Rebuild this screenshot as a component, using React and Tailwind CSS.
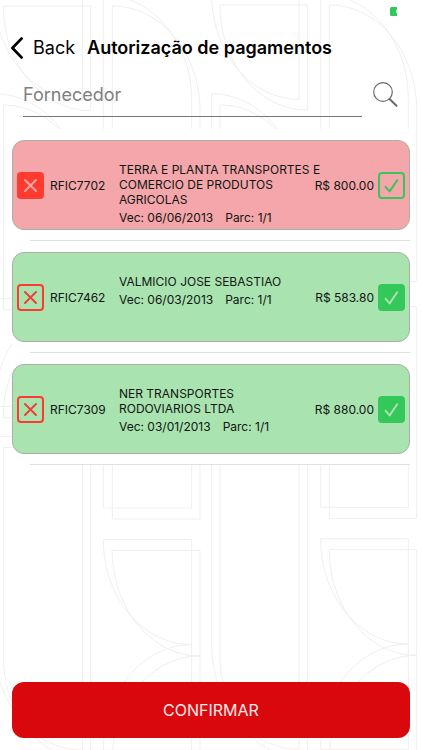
import React, { useState } from "react";

const initialPayments = [
  {
    code: "RFIC7702",
    lines: ["TERRA E PLANTA TRANSPORTES E", "COMERCIO DE PRODUTOS", "AGRICOLAS"],
    due: "06/06/2013",
    part: "1/1",
    amount: "800.00",
    approved: false,
  },
  {
    code: "RFIC7462",
    lines: ["VALMICIO JOSE SEBASTIAO"],
    due: "06/03/2013",
    part: "1/1",
    amount: "583.80",
    approved: true,
  },
  {
    code: "RFIC7309",
    lines: ["NER TRANSPORTES", "RODOVIARIOS LTDA"],
    due: "03/01/2013",
    part: "1/1",
    amount: "880.00",
    approved: true,
  },
];

// Thin-line tile pattern drawn behind the whole screen.
function Backdrop() {
  return (
    <svg
      className="pointer-events-none absolute inset-0 -z-10 h-full w-full"
      viewBox="0 0 1266 2250"
      preserveAspectRatio="xMidYMin slice"
      fill="none"
      stroke="#efefef"
      strokeWidth="3"
      aria-hidden="true"
    >
      <path d="M-16 -15H247V300C100 300 -16 160 -16 -15Z" />
      <path d="M10 18H272V332C127 332 10 192 10 18Z" />
      <path d="M635 -18H897V298C752 298 635 157 635 -18Z" />
      <path d="M660 15H922V330C777 330 660 190 660 15Z" />
      <path d="M310 -15C456 -15 575 126 575 300V845H310Z" />
      <path d="M337 18C482 18 600 158 600 332V845H337Z" />
      <path d="M962 -18C1108 -18 1225 123 1225 298V812H962Z" />
      <path d="M988 15C1133 15 1250 155 1250 330V845H988Z" />
      <path d="M-16 281C130 281 247 422 247 596V896H-16Z" />
      <path d="M10 315C155 315 272 456 272 630V929H10Z" />
      <path d="M635 281C780 281 897 422 897 596V896H635Z" />
      <path d="M660 315C805 315 922 456 922 630V929H660Z" />
      <path d="M247 904C102 904 -16 1045 -16 1219H247Z" />
      <path d="M272 937C127 937 10 1078 10 1252H272Z" />
      <path d="M310 887H575V1524H310Z" />
      <path d="M337 920H600V1557H337Z" />
      <path d="M962 887H1225V1522H962Z" />
      <path d="M988 920H1250V1555H988Z" />
      <path d="M310 1618H575V1934C429 1934 310 1793 310 1618Z" />
      <path d="M337 1651H600V1968C455 1968 337 1827 337 1651Z" />
      <path d="M962 1616H1225V1932C1079 1932 962 1791 962 1616Z" />
      <path d="M988 1649H1250V1966C1105 1966 988 1825 988 1649Z" />
      <path d="M-16 1309H247V2250C102 2250 -16 2110 -16 1935Z" />
      <path d="M10 1342H272V2283C127 2283 10 2143 10 1968Z" />
      <path d="M635 1309H897V2248C752 2248 635 2108 635 1933Z" />
      <path d="M660 1342H922V2281C777 2281 660 2141 660 1966Z" />
      <path d="M575 1934C429 1934 310 2075 310 2250M575 1934V2250" />
      <path d="M600 1968C455 1968 337 2108 337 2280M600 1968V2250" />
      <path d="M1225 1932C1079 1932 962 2073 962 2248H1225Z" />
      <path d="M1250 1966C1105 1966 988 2106 988 2280M1250 1966V2250" />
    </svg>
  );
}

function Mark({ tone, filled, label, onChange }) {
  const reject = tone === "reject";
  const box = reject
    ? "border-[#ff3b30] checked:bg-[#ff3b30]"
    : "border-[#34c759] checked:bg-[#34c759]";
  const stroke = reject
    ? filled ? "stroke-[#f9a5a8]" : "stroke-[#ef4136]"
    : filled ? "stroke-[#a9e3b0]" : "stroke-[#34c759]";
  return (
    <label className="grid size-[27px] shrink-0 cursor-pointer">
      <input
        type="checkbox"
        aria-label={label}
        checked={filled}
        onChange={onChange}
        className={`col-start-1 row-start-1 size-full appearance-none rounded-[4px] border-2 ${box}`}
      />
      <svg
        viewBox="0 0 27 27"
        fill="none"
        strokeWidth="2"
        strokeLinecap="round"
        strokeLinejoin="round"
        className={`pointer-events-none col-start-1 row-start-1 size-full ${stroke}`}
      >
        {reject ? <path d="M8 8L19 19M19 8L8 19" /> : <path d="M7.6 14.8L11.6 19.4L19.2 8.2" />}
      </svg>
    </label>
  );
}

function PaymentCard({ payment, onSet }) {
  const { code, lines, due, part, amount, approved } = payment;
  return (
    <li className="pt-[11px]">
      <div
        className={`flex h-[90px] items-center rounded-xl border border-[#a9b0aa] px-1 text-[12px] leading-[15px] text-[#101510] ${
          approved ? "bg-[#a9e3b0]" : "bg-[#f4a6ab]"
        }`}
      >
        <Mark tone="reject" filled={!approved} label={`Rejeitar ${code}`} onChange={() => onSet(false)} />
        <span className="ml-1.5 w-[58px] shrink-0">{code}</span>
        <div className="ml-[11px] min-w-0 flex-1 self-start whitespace-nowrap pt-[21px]">
          {lines.map((line) => (
            <p key={line}>{line}</p>
          ))}
          <p className="mt-[3px] flex gap-3">
            <span>Vec: {due}</span>
            <span>Parc: {part}</span>
          </p>
        </div>
        <span className="mr-1 shrink-0">R$ {amount}</span>
        <Mark tone="approve" filled={approved} label={`Aprovar ${code}`} onChange={() => onSet(true)} />
      </div>
      <div className="ml-[18px] mt-[10px] h-px bg-[#e2dfe2]" />
    </li>
  );
}

export default function App() {
  const [payments, setPayments] = useState(initialPayments);
  const setApproved = (code, approved) =>
    setPayments((list) => list.map((p) => (p.code === code ? { ...p, approved } : p)));

  return (
    <div className="relative isolate flex min-h-screen flex-col overflow-hidden bg-white px-3 pb-3 font-['Inter',sans-serif] text-black">
      <Backdrop />
      <div className="flex h-8 justify-end pr-[13px] pt-[7px]">
        <svg viewBox="0 0 7 9" className="h-[9px] w-[7px]" aria-hidden="true">
          <path d="M1.5 0H7V2.5Q5 4.5 7 6.5V9H1.5Q0 9 0 7.5V1.5Q0 0 1.5 0Z" fill="#34c759" />
        </svg>
      </div>

      <header className="-ml-px flex h-8 items-center gap-3">
        <button type="button" className="flex items-center gap-2.5 text-[18px] leading-6">
          <svg viewBox="0 0 12 22" className="h-[22px] w-3" fill="none" stroke="black" strokeWidth="2.6" strokeLinecap="round" strokeLinejoin="round" aria-hidden="true">
            <path d="M10.6 1.5L1.4 11L10.6 20.5" />
          </svg>
          Back
        </button>
        <h1 className="whitespace-nowrap text-[18px] font-semibold leading-6">Autorização de pagamentos</h1>
      </header>

      <form className="mt-2 flex items-center pl-[11px] pr-3" onSubmit={(e) => e.preventDefault()}>
        <input
          type="text"
          aria-label="Fornecedor"
          placeholder="Fornecedor"
          className="h-[45px] min-w-0 flex-1 border-b border-[#777777] bg-transparent text-[18px] outline-none placeholder:text-[#808080]"
        />
        <button type="submit" aria-label="Buscar" className="ml-[11px]">
          <svg viewBox="0 0 25 25" className="size-[25px]" fill="none" stroke="#6b6b6b" strokeLinecap="round" aria-hidden="true">
            <circle cx="10" cy="10" r="9.3" strokeWidth="1.2" />
            <path d="M16.5 17L23.5 23.7" strokeWidth="2" />
          </svg>
        </button>
      </form>

      <ul className="mt-3 bg-white">
        {payments.map((p) => (
          <PaymentCard key={p.code} payment={p} onSet={(v) => setApproved(p.code, v)} />
        ))}
      </ul>

      <button type="button" className="mt-auto h-14 rounded-xl bg-[#d9080c] text-[16px] text-[#fbe9e9]">
        CONFIRMAR
      </button>
    </div>
  );
}
